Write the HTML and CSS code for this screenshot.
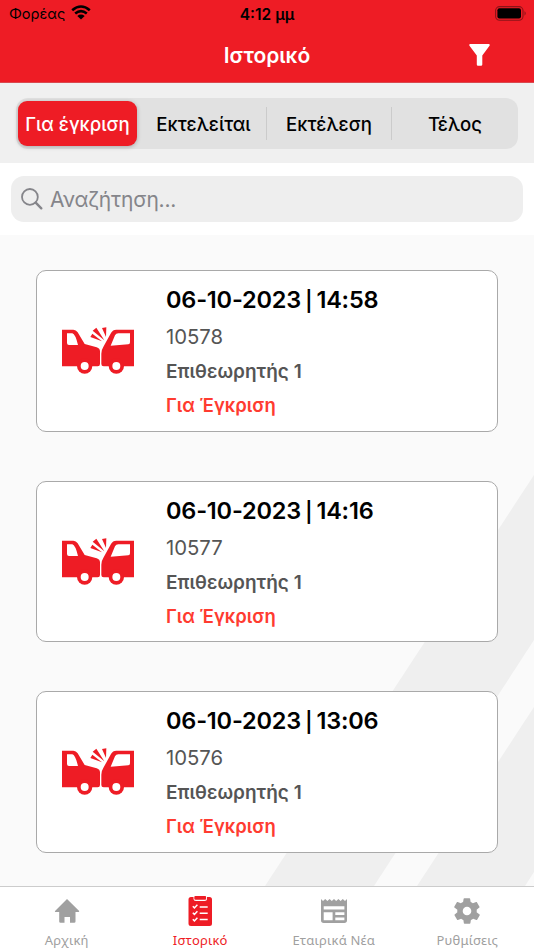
FILE: index.html
```html
<!DOCTYPE html>
<html lang="el">
<head>
  <meta charset="UTF-8">
  <title>Ιστορικό</title>
  <link rel="stylesheet" href="styles.css">
</head>
<body>
  <!-- shared crash icon -->
  <svg class="defs" width="0" height="0">
    <symbol id="crash" viewBox="36 36 216 144">
      <path fill-rule="evenodd" d="M36 44H70Q78 44 83 52L104 87L140 97Q150 100 150 109V147Q150 154 143 154H36ZM51 55V84Q51 90 57 90H84Q76 57 67 55Z"/>
      <path fill-rule="evenodd" d="M252 44H199Q188 44 183 54L161 94Q154 105 154 116V147Q154 154 161 154H252ZM240 55H205Q198 55 195 61L182 92L235 88Q240 88 240 82Z"/>
      <circle cx="104" cy="153" r="23"/>
      <circle cx="199" cy="153" r="23"/>
      <circle cx="104" cy="153" r="12" fill="#fff"/>
      <circle cx="199" cy="153" r="12" fill="#fff"/>
      <path d="M121 66L127 56L156 79ZM128 47L139 38L163 76ZM156 39L169 37L168 66Z"/>
    </symbol>
  </svg>

  <header>
    <div class="status">
      <div class="carrier">
        <span>Φορέας</span>
        <svg width="20" height="15" viewBox="0 0 20 15">
          <path d="M1.2 5.3Q10-2.3 18.8 5.3M4.2 8.5Q10 3.7 15.8 8.5" fill="none" stroke="#000" stroke-width="2.6"/>
          <path d="M6.3 10.9Q10 8 13.7 10.9L10 14.6Z"/>
        </svg>
      </div>
      <div class="time">4:12 μμ</div>
      <svg class="battery" width="32" height="15" viewBox="0 0 32 15">
        <rect x=".6" y=".6" width="27.4" height="13.6" rx="4" fill="none" stroke="#8c1318" stroke-width="1.1"/>
        <rect x="2.4" y="2.3" width="23.6" height="10.2" rx="2"/>
        <path d="M29.5 5Q32 7.3 29.5 9.8Z" fill="#8c1318"/>
      </svg>
    </div>
    <div class="titlebar">
      <h1>Ιστορικό</h1>
      <svg class="filter" width="21" height="22" viewBox="0 0 21 22">
        <path d="M1 0H20Q21 .2 20.7 1.5L13.3 11.5V20.5Q13.3 21.7 12 21.7H9Q7.8 21.7 7.8 20.5V11.5L.3 1.5Q0 .2 1 0Z" fill="#fff"/>
      </svg>
    </div>
  </header>

  <div class="tabs">
    <div class="segments">
      <div class="segment active"><span>Για έγκριση</span></div>
      <div class="segment running"><span>Εκτελείται</span></div>
      <div class="segment line"><span>Εκτέλεση</span></div>
      <div class="segment line"><span>Τέλος</span></div>
    </div>
  </div>

  <div class="search">
    <div class="search-box">
      <svg width="22" height="22" viewBox="0 0 22 22" fill="none" stroke="#85858a">
        <circle cx="8.9" cy="8.9" r="7.9" stroke-width="1.8"/>
        <path d="M14.7 14.7L20.3 20.3" stroke-width="2.4" stroke-linecap="round"/>
      </svg>
      <span>Αναζήτηση...</span>
    </div>
  </div>

  <main>
    <svg class="stripes" width="534" height="651" viewBox="0 235 534 651">
      <path d="M534 475V640L374 886H265ZM534 707V872L525 886H417Z" fill="#efefef"/>
    </svg>
    <div class="card">
      <svg class="crash" width="72" height="48"><use href="#crash"/></svg>
      <div class="info">
        <h2>06-10-2023 <span>|</span> 14:58</h2>
        <p class="code">10578</p>
        <p class="person">Επιθεωρητής 1</p>
        <p class="state">Για Έγκριση</p>
      </div>
    </div>
    <div class="card">
      <svg class="crash" width="72" height="48"><use href="#crash"/></svg>
      <div class="info">
        <h2>06-10-2023 <span>|</span> 14:16</h2>
        <p class="code">10577</p>
        <p class="person">Επιθεωρητής 1</p>
        <p class="state">Για Έγκριση</p>
      </div>
    </div>
    <div class="card">
      <svg class="crash" width="72" height="48"><use href="#crash"/></svg>
      <div class="info">
        <h2>06-10-2023 <span>|</span> 13:06</h2>
        <p class="code">10576</p>
        <p class="person">Επιθεωρητής 1</p>
        <p class="state">Για Έγκριση</p>
      </div>
    </div>
  </main>

  <nav>
    <a class="home">
      <svg width="32" height="32" viewBox="0 0 32 32">
        <path d="M16 4L28.2 16Q28.3 17 27.5 17H24.5V26.5Q24.5 27.8 23.2 27.8H19V22H13.5V27.8H9.5Q8.2 27.8 8.2 26.5V17H4.5Q3.5 17 4 16Z"/>
      </svg>
      <span>Αρχική</span>
    </a>
    <a class="history">
      <svg width="32" height="32" viewBox="0 0 32 32">
        <path d="M7 2H9.5V3.5Q9.5 6 12 6H20.5Q23 6 23 3.5V2H25.5Q28 2 28 4.5V28.5Q28 31 25.5 31H7Q4.5 31 4.5 28.5V4.5Q4.5 2 7 2Z"/>
        <rect x="10.3" y="1" width="11.8" height="3.8" rx="1"/>
        <path d="M8.8 11.3L10.4 12.9L13.4 9.8M8.8 17.8L10.4 19.4L13.4 16.3M8.8 24.3L10.4 25.9L13.4 22.8M15.7 12H23.7M15.7 18.3H23.7M15.7 24.5H23.7" fill="none" stroke="#fff" stroke-width="1.5"/>
      </svg>
      <span>Ιστορικό</span>
    </a>
    <a class="news">
      <svg width="32" height="32" viewBox="0 0 32 32">
        <path fill-rule="evenodd" d="M3 4L5 6L7.2 4L9.4 6L11.6 4L13.8 6L16 4L18.2 6L20.4 4L22.6 6L24.8 4L27 6L29 4V25.3Q29 28 26.3 28H5.7Q3 28 3 25.3ZM5.7 11.3V14.5H26.4V11.3ZM5.7 17.2V25.3H14.6V17.2ZM17.3 17.2V20H26.4V17.2ZM17.3 22.6V25.3H26.4V22.6Z"/>
      </svg>
      <span>Εταιρικά Νέα</span>
    </a>
    <a class="settings">
      <svg width="32" height="32" viewBox="2 2 20 20">
        <path d="M19.4 13c0-.3.1-.6.1-1s0-.7-.1-1l2.1-1.6c.2-.2.2-.4.1-.6l-2-3.5c-.1-.2-.4-.3-.6-.2l-2.5 1c-.5-.4-1.1-.7-1.7-1l-.4-2.6c0-.2-.2-.4-.5-.4h-4c-.2 0-.5.2-.5.4l-.4 2.6c-.6.3-1.2.6-1.7 1l-2.5-1c-.2-.1-.5 0-.6.2l-2 3.5c-.1.2-.1.5.1.6L4.6 11c0 .3-.1.7-.1 1s0 .7.1 1l-2.1 1.6c-.2.2-.2.4-.1.6l2 3.5c.1.2.4.3.6.2l2.5-1c.5.4 1.1.7 1.7 1l.4 2.6c0 .2.2.4.5.4h4c.2 0 .5-.2.5-.4l.4-2.6c.6-.3 1.2-.6 1.7-1l2.5 1c.2.1.5 0 .6-.2l2-3.5c.1-.2.1-.5-.1-.6z"/>
        <circle cx="12" cy="12" r="3.3" fill="#fff"/>
      </svg>
      <span>Ρυθμίσεις</span>
    </a>
  </nav>
</body>
</html>
```
FILE: styles.css
```css
* {
  box-sizing: border-box;
}
body {
  display: flex;
  flex-direction: column;
  height: 950px;
  margin: 0;
  overflow: hidden;
  background: #fafafa;
  font-family: Inter, "Noto Sans", sans-serif;
}
h1, h2, p {
  margin: 0;
}
.defs {
  position: absolute;
}
header {
  height: 83px;
  background: #ee1c25;
  border-bottom: 1px solid #d9494f;
}
.status {
  display: grid;
  grid-template-columns: 1fr auto 1fr;
  align-items: center;
  height: 28px;
  padding: 0 7px 0 9px;
}
.carrier {
  display: flex;
  align-items: center;
  gap: 6px;
  font-size: 14.6px;
}
.carrier svg {
  margin-top: -3px;
}
.time {
  font-size: 15.5px;
  font-weight: 600;
  padding-right: 2px;
}
.battery {
  justify-self: end;
  margin-top: -2px;
}
.titlebar {
  display: grid;
  grid-template-columns: 1fr auto 1fr;
  align-items: center;
  height: 54px;
  padding: 0 44px;
}
h1 {
  grid-column: 2;
  color: white;
  font-size: 21px;
  font-weight: 600;
}
.filter {
  justify-self: end;
}
.tabs {
  height: 80px;
  padding: 15px 16px;
  background: #f0f0f0;
}
.segments {
  display: grid;
  grid-template-columns: 121px 129px 125px 1fr;
  height: 51px;
  background: #e1e1e1;
  border-radius: 12px;
}
.segment {
  display: flex;
  align-items: center;
  justify-content: center;
  margin: 9px 0;
  font-size: 18.6px;
  font-weight: 500;
}
.running {
  padding-left: 4px;
}
.line {
  border-left: 1px solid #cbcbcb;
}
.active {
  margin: 3px 0 3px 2px;
  color: white;
  background: #ee1c25;
  border-radius: 9px;
  box-shadow: 0 1px 4px rgba(0,0,0,0.25);
}
.search {
  height: 72px;
  padding: 13px 11px;
  background: white;
}
.search-box {
  display: flex;
  align-items: center;
  gap: 7px;
  height: 46px;
  padding: 0 10px;
  background: #eee;
  border-radius: 13px;
  color: #85858a;
  font-size: 21px;
  letter-spacing: -0.2px;
}
main {
  position: relative;
  display: flex;
  flex-direction: column;
  gap: 49px;
  height: 651px;
  padding: 35px 36px 0;
}
.stripes {
  position: absolute;
  top: 0;
  left: 0;
}
.card {
  position: relative;
  display: flex;
  gap: 32px;
  height: 161.7px;
  padding: 12px 25px;
  background: white;
  border: 1px solid #a9a9a9;
  border-radius: 10px;
}
.crash {
  margin-top: 44px;
  fill: #ee1c25;
}
h2 {
  font-size: 23.5px;
  font-weight: 600;
  line-height: 34px;
  letter-spacing: -0.2px;
  word-spacing: -1.5px;
}
h2 span {
  font-size: 20px;
  line-height: 20px;
}
.info p {
  font-size: 18.8px;
  line-height: 34px;
}
.info .code {
  margin-top: 3px;
  color: #555;
  font-size: 20.3px;
}
.info .person {
  color: #555;
  font-size: 19px;
  font-weight: 600;
  line-height: 35px;
}
.info .state {
  color: #ff3b30;
  font-size: 18.5px;
  font-weight: 600;
  line-height: 32px;
}
nav {
  display: grid;
  grid-template-columns: repeat(4, 1fr);
  height: 64px;
  background: white;
  border-top: 1px solid #ccc;
}
nav a {
  display: flex;
  flex-direction: column;
  align-items: center;
  padding-top: 8px;
  color: #a0a0a0;
  fill: #a0a0a0;
  font-family: "Noto Sans", sans-serif;
  font-size: 13px;
  line-height: 18px;
  letter-spacing: 0.2px;
}
nav span {
  margin-top: 4px;
}
nav .history {
  color: #ee1c25;
  fill: #ee1c25;
}
nav .settings svg {
  padding: 3px;
}
```
